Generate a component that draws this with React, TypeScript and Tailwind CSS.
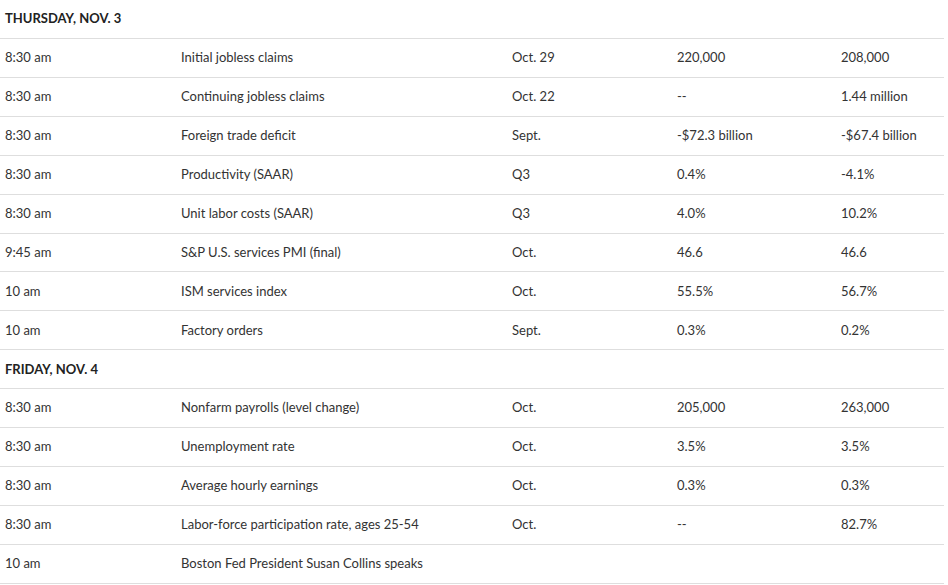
import clsx from "clsx";

type Row = {
  time: string;
  event: string;
  period?: string;
  forecast?: string;
  prior?: string;
};

type Day = { title: string; rows: Row[] };

const days: Day[] = [
  {
    title: "THURSDAY, NOV. 3",
    rows: [
      { time: "8:30 am", event: "Initial jobless claims", period: "Oct. 29", forecast: "220,000", prior: "208,000" },
      { time: "8:30 am", event: "Continuing jobless claims", period: "Oct. 22", forecast: "--", prior: "1.44 million" },
      { time: "8:30 am", event: "Foreign trade deficit", period: "Sept.", forecast: "-$72.3 billion", prior: "-$67.4 billion" },
      { time: "8:30 am", event: "Productivity (SAAR)", period: "Q3", forecast: "0.4%", prior: "-4.1%" },
      { time: "8:30 am", event: "Unit labor costs (SAAR)", period: "Q3", forecast: "4.0%", prior: "10.2%" },
      { time: "9:45 am", event: "S&P U.S. services PMI (final)", period: "Oct.", forecast: "46.6", prior: "46.6" },
      { time: "10 am", event: "ISM services index", period: "Oct.", forecast: "55.5%", prior: "56.7%" },
      { time: "10 am", event: "Factory orders", period: "Sept.", forecast: "0.3%", prior: "0.2%" },
    ],
  },
  {
    title: "FRIDAY, NOV. 4",
    rows: [
      { time: "8:30 am", event: "Nonfarm payrolls (level change)", period: "Oct.", forecast: "205,000", prior: "263,000" },
      { time: "8:30 am", event: "Unemployment rate", period: "Oct.", forecast: "3.5%", prior: "3.5%" },
      { time: "8:30 am", event: "Average hourly earnings", period: "Oct.", forecast: "0.3%", prior: "0.3%" },
      { time: "8:30 am", event: "Labor-force participation rate, ages 25-54", period: "Oct.", forecast: "--", prior: "82.7%" },
      { time: "10 am", event: "Boston Fed President Susan Collins speaks" },
    ],
  },
];

// each row: ~38.9px incl. bottom rule, matching the original table pitch
const rowBase = "h-[38.93px] border-b border-[#dedede]";

export default function App() {
  return (
    <div className="w-[944px] bg-white text-[13px] text-[#333] font-['Lato',sans-serif]">
      {days.map((day) => (
        <div key={day.title}>
          <div className={clsx(rowBase, "flex items-center pl-[5px] font-bold text-[#222]")}>
            {day.title}
          </div>
          {day.rows.map((r, i) => (
            <div key={i} className={clsx(rowBase, "grid grid-cols-[181px_331px_165px_164px_1fr] items-center")}>
              <span className="pl-[5px]">{r.time}</span>
              <span>{r.event}</span>
              <span>{r.period}</span>
              <span>{r.forecast}</span>
              <span>{r.prior}</span>
            </div>
          ))}
        </div>
      ))}
    </div>
  );
}
